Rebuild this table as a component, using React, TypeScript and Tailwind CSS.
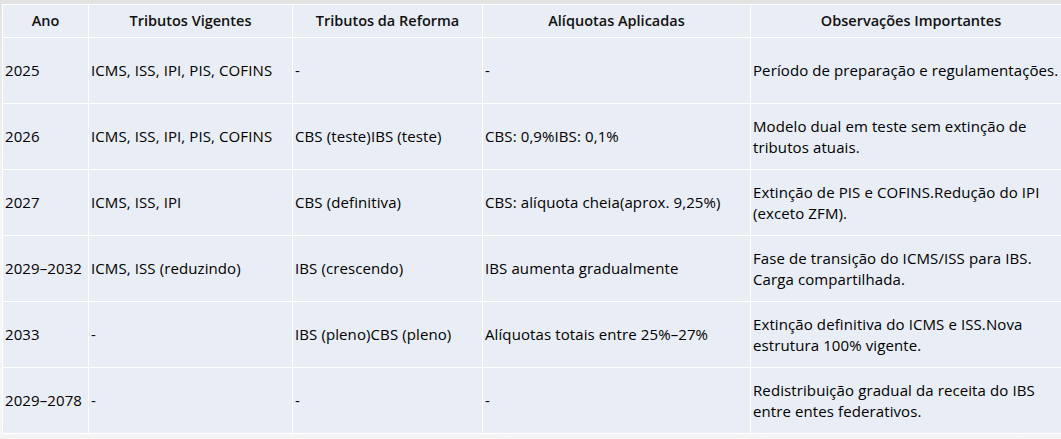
import React from "react";

type Row = {
  ano: string;
  vigentes: string;
  reforma: string;
  aliquotas: string;
  obs: string[];
};

const rows: Row[] = [
  {
    ano: "2025",
    vigentes: "ICMS, ISS, IPI, PIS, COFINS",
    reforma: "-",
    aliquotas: "-",
    obs: ["Período de preparação e regulamentações."],
  },
  {
    ano: "2026",
    vigentes: "ICMS, ISS, IPI, PIS, COFINS",
    reforma: "CBS (teste)IBS (teste)",
    aliquotas: "CBS: 0,9%IBS: 0,1%",
    obs: ["Modelo dual em teste sem extinção de", "tributos atuais."],
  },
  {
    ano: "2027",
    vigentes: "ICMS, ISS, IPI",
    reforma: "CBS (definitiva)",
    aliquotas: "CBS: alíquota cheia(aprox. 9,25%)",
    obs: ["Extinção de PIS e COFINS.Redução do IPI", "(exceto ZFM)."],
  },
  {
    ano: "2029–2032",
    vigentes: "ICMS, ISS (reduzindo)",
    reforma: "IBS (crescendo)",
    aliquotas: "IBS aumenta gradualmente",
    obs: ["Fase de transição do ICMS/ISS para IBS.", "Carga compartilhada."],
  },
  {
    ano: "2033",
    vigentes: "-",
    reforma: "IBS (pleno)CBS (pleno)",
    aliquotas: "Alíquotas totais entre 25%–27%",
    obs: ["Extinção definitiva do ICMS e ISS.Nova", "estrutura 100% vigente."],
  },
  {
    ano: "2029–2078",
    vigentes: "-",
    reforma: "-",
    aliquotas: "-",
    obs: ["Redistribuição gradual da receita do IBS", "entre entes federativos."],
  },
];

const headers = [
  "Ano",
  "Tributos Vigentes",
  "Tributos da Reforma",
  "Alíquotas Aplicadas",
  "Observações Importantes",
];

export default function App() {
  return (
    <div
      className="w-[1061px] h-[439px] overflow-hidden bg-gradient-to-b from-[#e3e3e3] via-[#f6f6f6] to-[#f4f4f4] pt-[4px] pl-[2px]"
      style={{ fontFamily: '"Open Sans", "Liberation Sans", sans-serif' }}
    >
      <div className="grid grid-cols-[85px_203px_189px_267px_320px] grid-rows-[32px_repeat(6,65px)] gap-px bg-white border border-white w-max text-[15px] tracking-[0.1px] text-black">
        {/* header */}
        {headers.map((h) => (
          <div
            key={h}
            className="bg-[#e9edf5] flex items-center justify-center font-semibold text-[14.5px] tracking-normal text-[#111]"
          >
            {h}
          </div>
        ))}

        {/* body */}
        {rows.map((r) => (
          <React.Fragment key={r.ano}>
            <div className="bg-[#e9edf5] flex items-center pl-[2px] whitespace-nowrap">{r.ano}</div>
            <div className="bg-[#e9edf5] flex items-center pl-[2px] whitespace-nowrap">{r.vigentes}</div>
            <div className="bg-[#e9edf5] flex items-center pl-[2px] whitespace-nowrap">{r.reforma}</div>
            <div className="bg-[#e9edf5] flex items-center pl-[2px] whitespace-nowrap">{r.aliquotas}</div>
            <div className="bg-[#e9edf5] flex flex-col justify-center pl-[2px] leading-[21px] whitespace-nowrap">
              {r.obs.map((line) => (
                <span key={line}>{line}</span>
              ))}
            </div>
          </React.Fragment>
        ))}
      </div>
    </div>
  );
}
